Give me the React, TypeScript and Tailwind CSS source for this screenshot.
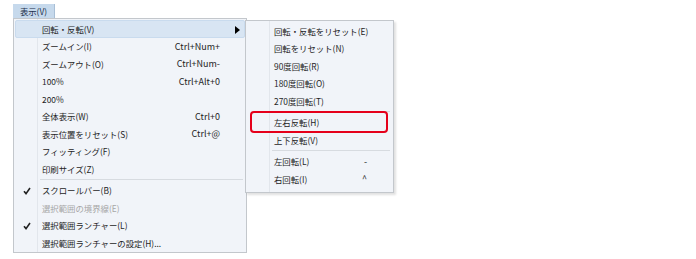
import React from 'react'

type Item =
  | { sep: true }
  | { label: string; key?: string; check?: boolean; disabled?: boolean; active?: boolean; arrow?: boolean; mark?: boolean }

const mainItems: Item[] = [
  { label: '回転・反転(V)', active: true, arrow: true },
  { label: 'ズームイン(I)', key: 'Ctrl+Num+' },
  { label: 'ズームアウト(O)', key: 'Ctrl+Num-' },
  { label: '100%', key: 'Ctrl+Alt+0' },
  { label: '200%' },
  { label: '全体表示(W)', key: 'Ctrl+0' },
  { label: '表示位置をリセット(S)', key: 'Ctrl+@' },
  { label: 'フィッティング(F)' },
  { label: '印刷サイズ(Z)' },
  { sep: true },
  { label: 'スクロールバー(B)', check: true },
  { label: '選択範囲の境界線(E)', disabled: true },
  { label: '選択範囲ランチャー(L)', check: true },
  { label: '選択範囲ランチャーの設定(H)...' },
  { sep: true },
]

const subItems: Item[] = [
  { label: '回転・反転をリセット(E)' },
  { label: '回転をリセット(N)' },
  { label: '90度回転(R)' },
  { label: '180度回転(O)' },
  { label: '270度回転(T)' },
  { sep: true },
  { label: '左右反転(H)', mark: true },
  { label: '上下反転(V)' },
  { sep: true },
  { label: '左回転(L)', key: '-' },
  { label: '右回転(I)', key: '^' },
]

function Check() {
  return (
    <svg width="8" height="8" viewBox="0 0 8 8" className="absolute left-[8px] top-[5px]">
      <path d="M1 4.2 L3 6.6 L7 1" fill="none" stroke="#222" strokeWidth="1.6" />
    </svg>
  )
}

function MenuList({ items, gutter }: { items: Item[]; gutter: number }) {
  return (
    <div className="flex flex-col">
      {items.map((it, i) =>
        'sep' in it ? (
          <div key={i} className="h-[4px] flex items-center" style={{ paddingLeft: gutter + 2 }}>
            <div className="h-px w-full bg-[#d7dbe0] mr-[2px]" />
          </div>
        ) : (
          <div
            key={i}
            className={
              'relative h-[17.5px] flex items-center whitespace-nowrap pr-[25px] ' +
              (it.active ? 'bg-[#d8e5f3] border border-[#c9dbee] rounded-[2px]' : '')
            }
            style={{ paddingLeft: it.active ? gutter + 3 : gutter + 4 }}
          >
            {it.check && <Check />}
            <span className={'flex-1 text-[8.4px] ' + (it.disabled ? 'text-[#a7a7a7]' : 'text-[#1e1e1e]')}>{it.label}</span>
            {it.key && <span className="text-[#1e1e1e]">{it.key}</span>}
            {it.arrow && (
              <svg width="5" height="8" viewBox="0 0 5 8" className="absolute right-[4px] top-[5px]">
                <path d="M0 0 L5 4 L0 8 Z" fill="#000" />
              </svg>
            )}
            {it.mark && (
              <div className="absolute left-[3px] right-[4px] top-[-3px] bottom-[-2px] border-2 border-[#e5001b] rounded-[4px]" />
            )}
          </div>
        )
      )}
    </div>
  )
}

export default function App() {
  return (
    <div
      className="relative w-[696px] h-[259px] bg-white overflow-hidden pl-[13px] pt-[4px] text-[9px] leading-none"
      style={{ fontFamily: '"Noto Sans CJK JP", "Noto Sans", sans-serif' }}
    >
      <div className="w-[42px] h-[14px] bg-[#c6d9ec] border-r border-[#a9bfd6] text-[#1b2f4a] text-[8.4px] flex items-center justify-center">
        表示(V)
      </div>

      {/* main menu */}
      <div className="relative w-[234px] h-[235px] border border-[#c3c7cc] bg-[#f1f4f9] p-[1px] overflow-hidden">
        <div className="absolute left-[23px] top-0 bottom-0 w-px bg-[#e2e6ec]" />
        <MenuList items={mainItems} gutter={23} />
      </div>

      {/* submenu */}
      <div className="absolute left-[245px] top-[20px] w-[149px] h-[173px] border border-[#c3c7cc] bg-[#f1f4f9] p-[1px] shadow-[2px_2px_2px_rgba(0,0,0,0.12)]">
        <div className="absolute left-[23px] top-0 bottom-0 w-px bg-[#e2e6ec]" />
        <MenuList items={subItems} gutter={23} />
      </div>
    </div>
  )
}
